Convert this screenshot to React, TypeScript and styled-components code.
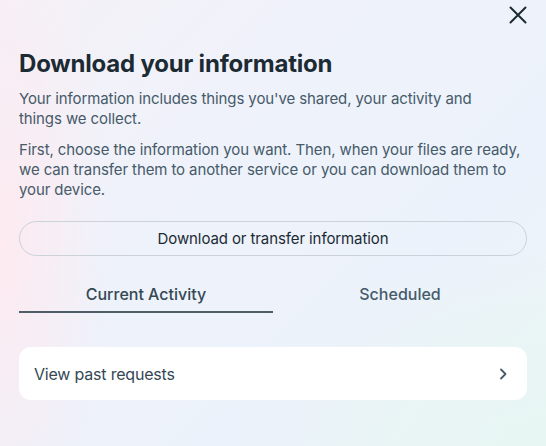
import React from 'react';
import styled, { createGlobalStyle } from 'styled-components';

const GlobalStyle = createGlobalStyle`
  html, body {
    margin: 0;
    padding: 0;
  }
  body {
    font-family: Inter, "Noto Sans", "Liberation Sans", sans-serif;
    color: #1c2b33;
  }
`;

const Page = styled.div`
  width: 546px;
  height: 446px;
  box-sizing: border-box;
  padding: 0 19px;
  overflow: hidden;
  background:
    radial-gradient(ellipse 110px 320px at 0% 55%, rgba(253, 234, 240, 1), rgba(253, 234, 240, 0)),
    radial-gradient(ellipse 320px 200px at 100% 100%, rgba(231, 246, 243, 1), rgba(231, 246, 243, 0)),
    linear-gradient(135deg, #f5f1f7 0%, #eef2fb 40%, #ecf2fb 70%, #ecf5f6 100%);
`;

const TopBar = styled.div`
  display: flex;
  justify-content: flex-end;
  height: 49px;
  padding-top: 6px;
  box-sizing: border-box;
`;

const CloseButton = styled.button`
  width: 18px;
  height: 18px;
  padding: 0;
  border: none;
  background: none;
  display: flex;
  align-items: center;
  justify-content: center;
  cursor: pointer;
`;

const Title = styled.h1`
  margin: 0;
  font-size: 24px;
  line-height: 30px;
  font-weight: 700;
  letter-spacing: -0.2px;
  color: #1c2b33;
`;

const Paragraph = styled.p<{ $gap: number }>`
  margin: ${(p) => p.$gap}px 0 0;
  font-size: 15px;
  line-height: 20px;
  letter-spacing: -0.1px;
  color: #465a69;
`;

const PillButton = styled.button`
  margin-top: 21px;
  width: 100%;
  height: 35px;
  border: 1px solid #cbd2d9;
  border-radius: 18px;
  background: transparent;
  font-family: inherit;
  font-size: 15px;
  letter-spacing: -0.1px;
  color: #1c2b33;
  cursor: pointer;
`;

const Tabs = styled.div`
  display: flex;
  margin-top: 17px;
`;

const Tab = styled.div<{ $active?: boolean }>`
  flex: 1;
  height: 40px;
  padding-top: 4px;
  box-sizing: border-box;
  display: flex;
  align-items: center;
  justify-content: center;
  font-size: 16px;
  font-weight: 500;
  color: ${(p) => (p.$active ? '#344854' : '#465a69')};
  border-bottom: 2px solid ${(p) => (p.$active ? '#4f5d67' : 'transparent')};
`;

const Card = styled.div`
  margin-top: 34px;
  height: 53px;
  box-sizing: border-box;
  padding: 0 19px 0 15px;
  display: flex;
  align-items: center;
  justify-content: space-between;
  background: #ffffff;
  border-radius: 12px;
`;

const CardLabel = styled.span`
  font-size: 16px;
  letter-spacing: -0.2px;
  color: #344854;
`;

const CloseIcon = () => (
  <svg width="18" height="18" viewBox="0 0 18 18">
    <path d="M1.5 1.5 L16.5 16.5 M16.5 1.5 L1.5 16.5" stroke="#1c2b33" strokeWidth="2" strokeLinecap="round" />
  </svg>
);

const Chevron = () => (
  <svg width="10" height="12" viewBox="0 0 10 12">
    <path d="M3 1.5 L7.5 6 L3 10.5" fill="none" stroke="#465a69" strokeWidth="1.8" strokeLinecap="round" strokeLinejoin="round" />
  </svg>
);

const App = () => (
  <Page>
    <GlobalStyle />
    <TopBar>
      <CloseButton aria-label="Close">
        <CloseIcon />
      </CloseButton>
    </TopBar>
    <Title>Download your information</Title>
    <Paragraph $gap={10}>
      Your information includes things you've shared, your activity and
      <br />
      things we collect.
    </Paragraph>
    <Paragraph $gap={11}>
      First, choose the information you want. Then, when your files are ready,
      <br />
      we can transfer them to another service or you can download them to
      <br />
      your device.
    </Paragraph>
    <PillButton>Download or transfer information</PillButton>
    <Tabs>
      <Tab $active>Current Activity</Tab>
      <Tab>Scheduled</Tab>
    </Tabs>
    <Card>
      <CardLabel>View past requests</CardLabel>
      <Chevron />
    </Card>
  </Page>
);

export default App;
